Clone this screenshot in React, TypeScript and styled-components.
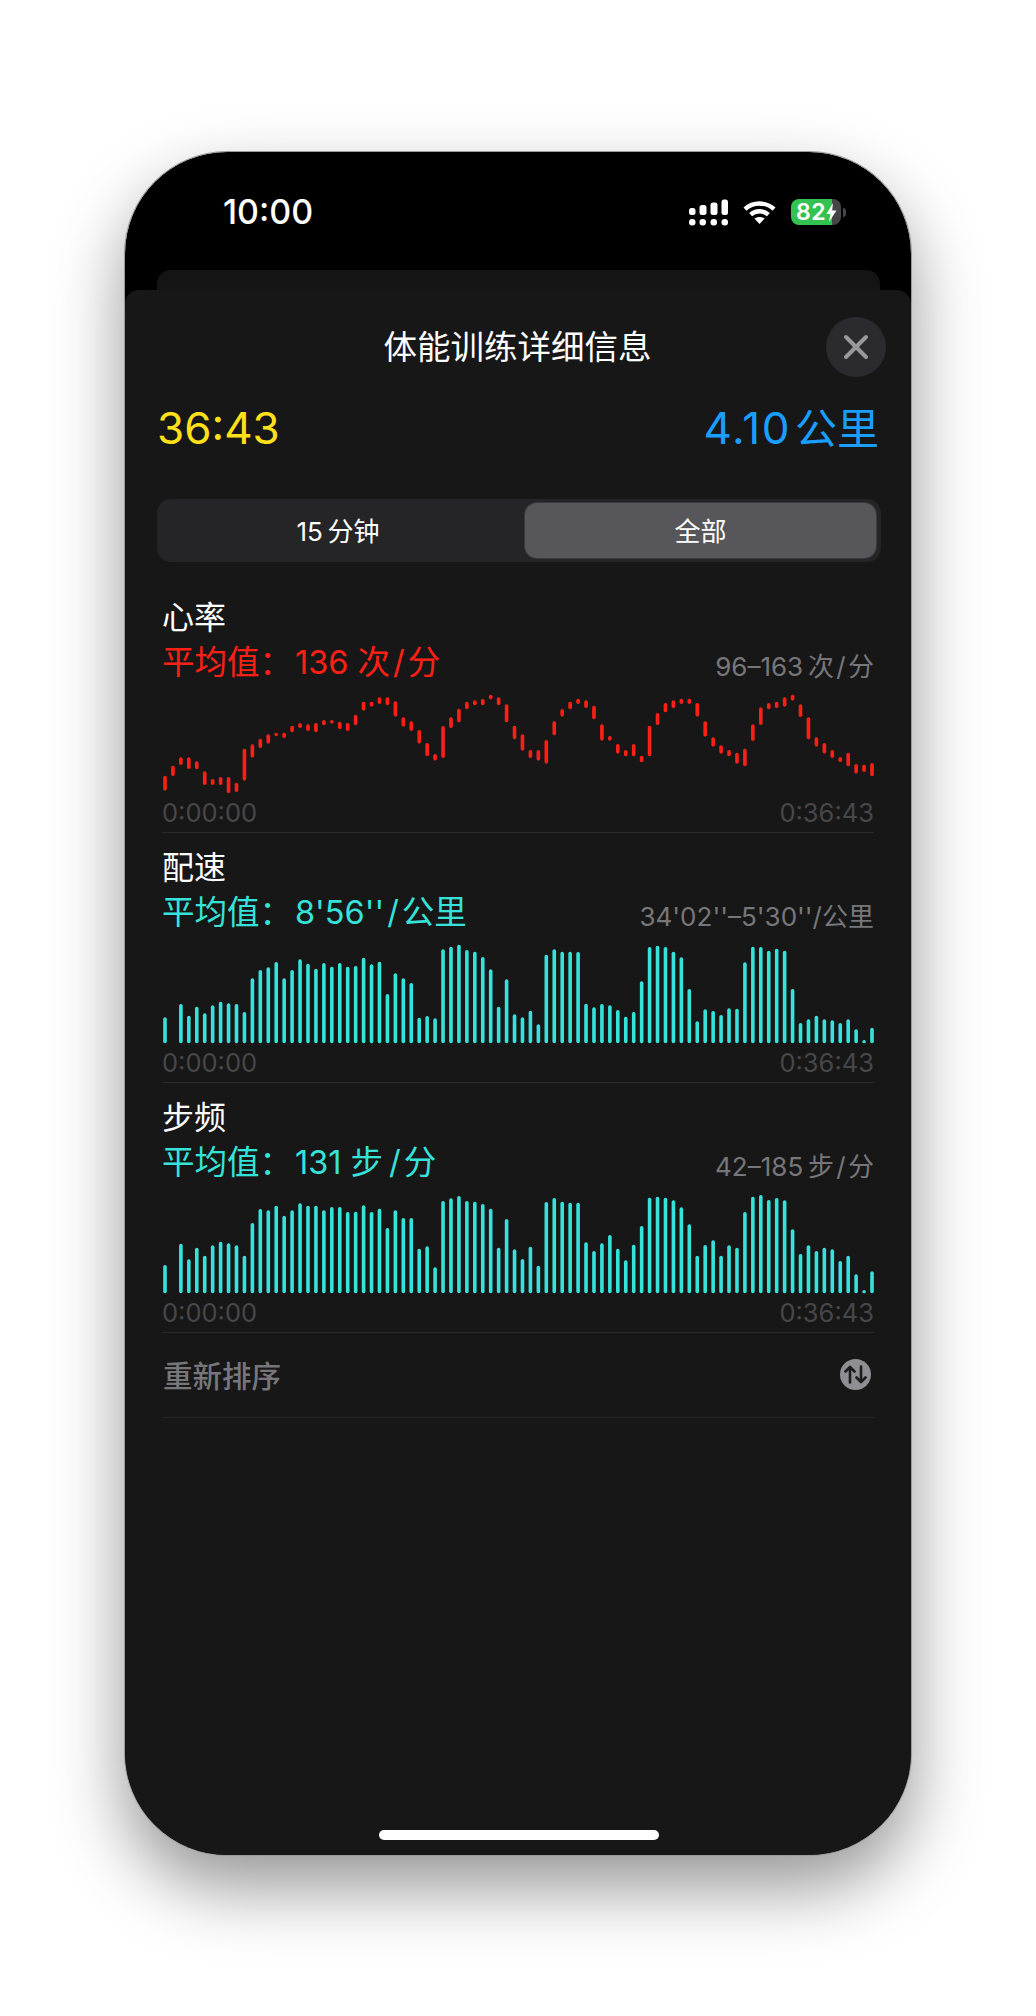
import styled, { createGlobalStyle } from "styled-components";

const GlobalStyle = createGlobalStyle`
  html, body { margin: 0; padding: 0; background: #fff; }
  body { font-family: Inter, "Noto Sans CJK SC", sans-serif; -webkit-font-smoothing: antialiased; }
`;

const Page = styled.div`
  width: 1036px;
  height: 2016px;
  padding-top: 152px;
  box-sizing: border-box;
  display: flex;
  justify-content: center;
  overflow: hidden;
`;

const Phone = styled.div`
  width: 786px;
  height: 1703px;
  border-radius: 102px;
  background: #000;
  overflow: hidden;
  display: flex;
  flex-direction: column;
  outline: 1px solid #9a9a9a;
  box-shadow: 0 32px 70px rgba(0, 0, 0, 0.42);
`;

const StatusBar = styled.div`
  height: 118px;
  flex: none;
  box-sizing: border-box;
  padding: 44px 65px 0 98px;
  display: flex;
  justify-content: space-between;
  align-items: flex-start;
  color: #fff;
`;

const Clock = styled.div`
  font-size: 34px;
  line-height: 32px;
  font-weight: 500;
`;

const StatusIcons = styled.div`
  display: flex;
  align-items: center;
  gap: 15px;
  height: 32px;
`;

const BatteryWrap = styled.div`
  display: flex;
  align-items: center;
  gap: 2px;
`;

const Battery = styled.div`
  width: 50px;
  height: 26px;
  border-radius: 8px;
  overflow: hidden;
  background: linear-gradient(90deg, #34c252 0 82%, #454547 82% 100%);
  display: flex;
  align-items: center;
  padding-left: 5px;
  box-sizing: border-box;
`;

const BatteryText = styled.span`
  font-size: 23px;
  line-height: 26px;
  font-weight: 600;
  color: #fff;
  letter-spacing: 0.5px;
`;

const BatteryNub = styled.div`
  width: 3px;
  height: 9px;
  border-radius: 0 3px 3px 0;
  background: #454547;
`;

const BackSheet = styled.div`
  height: 20px;
  flex: none;
  margin: 0 31px 0 32px;
  border-radius: 14px 14px 0 0;
  background: #141414;
`;

const Sheet = styled.div`
  flex: 1;
  background: #171717;
  border-radius: 14px 14px 0 0;
  padding: 0 30px 0 32px;
  display: flex;
  flex-direction: column;
  position: relative;
`;

const Header = styled.div`
  height: 108px;
  box-sizing: border-box;
  display: grid;
  grid-template-columns: 1fr auto 1fr;
  align-items: center;
`;

const Title = styled.div`
  grid-column: 2;
  font-size: 33.5px;
  font-weight: 400;
  color: #fff;
  margin-left: -3px;
`;

const CloseButton = styled.div`
  grid-column: 3;
  justify-self: end;
  width: 60px;
  height: 60px;
  margin: 6px -5px 0 0;
  border-radius: 50%;
  background: #2b2b2f;
  display: flex;
  align-items: center;
  justify-content: center;
`;

const Stats = styled.div`
  height: 60px;
  padding: 0 2px 0 0;
  display: flex;
  justify-content: space-between;
  align-items: center;
`;

const StatValue = styled.div<{ $color: string }>`
  font-size: 44px;
  line-height: 60px;
  color: ${(p) => p.$color};
`;

const StatNumber = styled.span`
  letter-spacing: 1.5px;
`;

const StatUnit = styled.span`
  font-size: 42px;
`;

const Segmented = styled.div`
  margin-top: 41px;
  height: 63px;
  box-sizing: border-box;
  padding: 4px 5px 4px 0;
  border-radius: 14px;
  background: #252527;
  display: grid;
  grid-template-columns: 1fr 351px;
`;

const SegmentItem = styled.div<{ $active?: boolean }>`
  display: flex;
  align-items: center;
  justify-content: center;
  box-sizing: border-box;
  padding: 0 ${(p) => (p.$active ? 0 : 6)}px 3px 0;
  font-size: 26px;
  white-space: pre;
  color: #fff;
  border-radius: 12px;
  background: ${(p) => (p.$active ? "#56565b" : "transparent")};
  box-shadow: ${(p) => (p.$active ? "0 0 0 1px #3a3a3e" : "none")};
`;

const Metrics = styled.div`
  margin: 28px 7px 0 5px;
  display: flex;
  flex-direction: column;
`;

const Metric = styled.section`
  height: 243px;
  box-sizing: border-box;
  margin-bottom: 7px;
  padding-top: 8px;
  border-bottom: 1px solid #2a2a2c;
`;

const MetricName = styled.div`
  font-size: 32px;
  line-height: 40px;
  height: 40px;
  color: #fff;
`;

const AverageRow = styled.div`
  margin-top: 5px;
  height: 39px;
  display: flex;
  justify-content: space-between;
  align-items: flex-start;
  line-height: 40px;
`;

const Average = styled.div<{ $color: string }>`
  font-size: 32.5px;
  color: ${(p) => p.$color};
  white-space: pre;
`;

const Range = styled.div`
  margin-top: 4px;
  font-size: 26px;
  color: #77777b;
  white-space: pre;
`;

const ChartSvg = styled.svg`
  display: block;
  margin: 8px 0 0 1px;
  overflow: visible;
`;

const TimeRow = styled.div`
  margin-top: 3px;
  height: 28px;
  display: flex;
  justify-content: space-between;
  align-items: center;
  font-size: 25.5px;
  color: #47474a;
`;

const ReorderRow = styled.div`
  height: 85px;
  box-sizing: border-box;
  margin-top: -7px;
  padding: 0 3px 2px 1px;
  border-bottom: 1px solid #242426;
  display: flex;
  align-items: center;
  justify-content: space-between;
`;

const ReorderLabel = styled.div`
  font-size: 29.5px;
  font-weight: 500;
  color: #77777b;
`;

const ReorderIcon = styled.div`
  width: 31px;
  height: 31px;
  border-radius: 50%;
  background: #8e8e93;
  display: flex;
  align-items: center;
  justify-content: center;
`;

const HomeIndicator = styled.div`
  position: absolute;
  left: 254px;
  bottom: 15px;
  width: 280px;
  height: 10px;
  border-radius: 5px;
  background: #fff;
`;

// heart rate candles, [top, bottom] measured at 3x from the chart top edge + 300
const heartRate: [number, number][] = [
  [557, 602], [527, 558], [502, 525], [502, 537], [514, 538], [544, 585], [567, 585], [561, 585], [561, 610], [578, 606],
  [476, 572], [463, 503], [446, 474], [433, 461], [428, 439], [428, 444], [407, 427], [399, 414], [403, 423], [399, 427],
  [390, 406], [390, 401], [395, 418], [399, 423], [374, 406], [335, 362], [335, 350], [322, 342], [322, 346], [334, 380],
  [382, 410], [394, 423], [420, 461], [459, 499], [492, 512], [408, 504], [382, 414], [356, 397], [335, 358], [331, 346],
  [327, 346], [314, 328], [322, 346], [343, 397], [407, 448], [433, 482], [480, 504], [480, 512], [450, 521], [394, 436],
  [357, 380], [335, 358], [326, 342], [331, 354], [347, 388], [403, 452], [438, 452], [462, 491], [480, 499], [462, 499],
  [497, 517], [407, 499], [369, 405], [339, 367], [331, 354], [326, 342], [326, 342], [339, 380], [394, 440], [442, 470],
  [466, 491], [480, 499], [488, 521], [476, 529], [403, 453], [352, 405], [339, 358], [335, 354], [322, 350], [314, 332],
  [343, 381], [382, 448], [442, 470], [459, 491], [480, 504], [501, 516], [488, 529], [522, 551], [524, 546], [519, 559],
];

const paceTops = [
  532, 610, 492, 527, 500, 520, 496, 485, 490, 492, 516, 415, 390, 382, 366, 415, 390, 358, 371, 386, 369, 380, 369, 380, 378,
  353, 373, 365, 462, 400, 415, 429, 533, 528, 535, 328, 320, 314, 330, 335, 351, 388, 500, 418, 523, 532, 512, 553, 344, 328,
  335, 335, 336, 491, 502, 492, 496, 510, 530, 516, 424, 321, 317, 321, 335, 352, 447, 544, 508, 513, 525, 505, 506, 367, 320,
  321, 332, 326, 332, 447, 549, 538, 527, 538, 541, 549, 538, 568, 600, 563,
];

const cadenceTops = [
  525, 610, 461, 508, 473, 497, 466, 455, 460, 466, 497, 399, 357, 361, 347, 377, 361, 340, 347, 347, 361, 351, 351, 366, 365,
  346, 366, 356, 414, 361, 384, 384, 476, 469, 532, 333, 325, 318, 333, 335, 342, 356, 473, 387, 478, 507, 470, 527, 336, 324,
  335, 338, 338, 457, 483, 460, 435, 476, 511, 464, 408, 323, 320, 323, 331, 352, 403, 497, 465, 451, 497, 466, 473, 366, 320,
  315, 330, 324, 331, 418, 492, 466, 483, 473, 478, 513, 497, 553, 600, 544,
];

const RED = "#ff2015";
const TEAL = "#35e3da";
const STEP = 7.944;

const toBars = (tops: number[]): [number, number][] => tops.map((t) => [t, 610]);

const Chart = ({ bars, color }: { bars: [number, number][]; color: string }) => (
  <ChartSvg width="710" height="105" viewBox="0 0 710 105">
    {bars.map(([top, bottom], i) =>
      top >= bottom ? null : (
        <rect
          key={i}
          x={i * STEP + 0.2}
          y={top / 3 - 100}
          width="3.6"
          height={(bottom - top) / 3}
          rx="1.8"
          fill={color}
        />
      )
    )}
  </ChartSvg>
);

const metrics = [
  { name: "心率", average: "平均值：\u200a136 次\u200a/\u200a分", range: "96–163\u2009次\u200a/\u200a分", color: RED, bars: heartRate },
  { name: "配速", average: "平均值：\u200a8'56''\u200a/\u200a公里", range: "34'02''–5'30''/公里", color: TEAL, bars: toBars(paceTops) },
  { name: "步频", average: "平均值：\u200a131 步\u200a\u200a/\u200a分", range: "42–185\u2009步\u200a/\u200a分", color: TEAL, bars: toBars(cadenceTops) },
];

const SignalIcon = () => (
  <svg width="39" height="27" viewBox="0 0 39 27" fill="#fff">
    <rect x="0" y="9" width="6.5" height="7" rx="2.5" />
    <rect x="10.5" y="6" width="7" height="10" rx="2.5" />
    <rect x="21.5" y="3.5" width="7" height="12.5" rx="2.5" />
    <rect x="32.5" y="0.5" width="6.5" height="15.5" rx="2.5" />
    <rect x="0" y="20" width="6.5" height="6.5" rx="3" />
    <rect x="10.5" y="20" width="6.5" height="6.5" rx="3" />
    <rect x="21.5" y="20" width="6.5" height="6.5" rx="3" />
    <rect x="32.5" y="20" width="6.5" height="6.5" rx="3" />
  </svg>
);

const WifiIcon = () => (
  <svg width="33" height="23" viewBox="0 0 33 23" fill="none" stroke="#fff" strokeWidth="4.4" strokeLinecap="butt">
    <path d="M2 8.2 C10 0.6 23 0.6 31 8.2" />
    <path d="M7.6 13.6 C12.6 9.2 20.4 9.2 25.4 13.6" />
    <path d="M16.5 23 L11.4 17.6 C14.4 15.4 18.6 15.4 21.6 17.6 Z" fill="#fff" stroke="none" />
  </svg>
);

const BoltIcon = () => (
  <svg width="11" height="19" viewBox="0 0 11 19" fill="#fff">
    <path d="M7 0 L0.5 11 H4.5 L3 19 L10.5 7.5 H6.2 Z" />
  </svg>
);

const CloseIcon = () => (
  <svg width="26" height="26" viewBox="0 0 26 26" fill="none" stroke="#98989d" strokeWidth="4" strokeLinecap="round">
    <path d="M3 3 L23 23 M23 3 L3 23" />
  </svg>
);

const ReorderGlyph = () => (
  <svg width="23" height="19" viewBox="0 0 23 19" fill="none" stroke="#1c1c1e" strokeWidth="2.6" strokeLinecap="round" strokeLinejoin="round">
    <path d="M6 17.5 V2 M1.5 6.5 L6 1.8 L10.5 6.5" />
    <path d="M17 1.5 V17 M12.5 12.5 L17 17.2 L21.5 12.5" />
  </svg>
);

export default function App() {
  return (
    <Page>
      <GlobalStyle />
      <Phone>
        <StatusBar>
          <Clock>10:00</Clock>
          <StatusIcons>
            <SignalIcon />
            <WifiIcon />
            <BatteryWrap>
              <Battery>
                <BatteryText>82</BatteryText>
                <BoltIcon />
              </Battery>
              <BatteryNub />
            </BatteryWrap>
          </StatusIcons>
        </StatusBar>
        <BackSheet />
        <Sheet>
          <Header>
            <Title>体能训练详细信息</Title>
            <CloseButton>
              <CloseIcon />
            </CloseButton>
          </Header>
          <Stats>
            <StatValue $color="#ffe01a">36:43</StatValue>
            <StatValue $color="#1a9fff">
              <StatNumber>4.10</StatNumber>
              {"\u200a"}
              <StatUnit>公里</StatUnit>
            </StatValue>
          </Stats>
          <Segmented>
            <SegmentItem>{"15\u2009分钟"}</SegmentItem>
            <SegmentItem $active>全部</SegmentItem>
          </Segmented>
          <Metrics>
            {metrics.map((m) => (
              <Metric key={m.name}>
                <MetricName>{m.name}</MetricName>
                <AverageRow>
                  <Average $color={m.color}>{m.average}</Average>
                  <Range>{m.range}</Range>
                </AverageRow>
                <Chart bars={m.bars} color={m.color} />
                <TimeRow>
                  <span>0:00:00</span>
                  <span>0:36:43</span>
                </TimeRow>
              </Metric>
            ))}
            <ReorderRow>
              <ReorderLabel>重新排序</ReorderLabel>
              <ReorderIcon>
                <ReorderGlyph />
              </ReorderIcon>
            </ReorderRow>
          </Metrics>
          <HomeIndicator />
        </Sheet>
      </Phone>
    </Page>
  );
}
